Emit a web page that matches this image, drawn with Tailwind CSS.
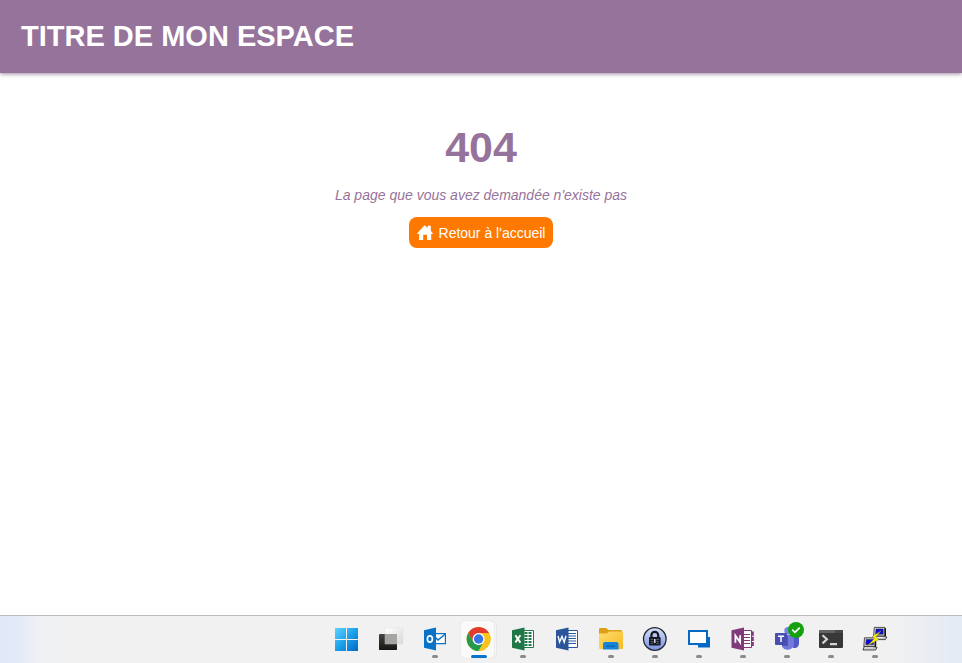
<!DOCTYPE html>
<html lang="fr">

<head>
    <meta charset="UTF-8">
    <meta name="viewport" content="width=device-width, initial-scale=1.0">
    <title>404 - Titre de mon espace</title>
    <script src="https://cdn.jsdelivr.net/npm/@tailwindcss/browser@4"></script>
</head>

<body class="min-h-screen flex flex-col bg-white font-['Liberation_Sans',Arial,sans-serif]">
    <header class="bg-[#96739b] text-white px-[21px] py-4 shadow-[0_1px_4px_rgba(90,60,95,0.6)]">
        <h1 class="text-[29px] leading-10 font-bold pb-px">TITRE DE MON ESPACE</h1>
    </header>

    <main class="flex-1 flex flex-col items-center pt-12 text-[#96739b]">
        <h2 class="text-[43px] leading-[52px] font-bold">404</h2>
        <p class="text-sm leading-5 italic mt-3">La page que vous avez demandée n'existe pas</p>
        <a href="/" class="mt-3 flex items-center gap-1.5 h-[31px] px-2 rounded-lg bg-[#ff7900] text-white text-sm">
            <svg class="w-4 h-4" viewBox="0 0 16 16" fill="#fff">
                <path d="M7.6.2 10.7 3V.7h3.1v5.1L15.6 8v1h-1.4v6H10V9.8H6.2V15H2.1V9H.4V8z" />
            </svg>
            Retour à l'accueil
        </a>
    </main>

    <!-- Barre des tâches -->
    <nav class="flex justify-center h-12 pl-[258px] border-t border-[#bcbcbc] bg-[linear-gradient(90deg,#dee8f7_0,#e5ebf7_22px,#f0f1f3_42px,#f1f1f1_80px,#f1f1f1_calc(100%-72px),#e3eaf5_100%)]">
        <button aria-label="Démarrer" class="relative w-11 flex justify-center pt-[11px]">
            <svg class="w-6 h-6 overflow-visible" viewBox="0 0 24 24">
                <defs>
                    <linearGradient id="win" x1="1" y1="1" x2="24" y2="24" gradientUnits="userSpaceOnUse">
                        <stop stop-color="#5cd4ff" />
                        <stop offset=".5" stop-color="#1ca0e8" />
                        <stop offset="1" stop-color="#0069c8" />
                    </linearGradient>
                </defs>
                <path fill="url(#win)" d="M1 1h11v11H1zM13 1h11v11H13zM1 13h11v11H1zM13 13h11v11H13z" />
            </svg>
        </button>
        <button aria-label="Vue des tâches" class="relative w-11 flex justify-center pt-[11px]">
            <svg class="w-6 h-6 overflow-visible" viewBox="0 0 24 24">
                <defs>
                    <linearGradient id="tvd" x2="0" y2="1">
                        <stop stop-color="#454541" />
                        <stop offset="1" stop-color="#151512" />
                    </linearGradient>
                    <linearGradient id="tvl" x2="1" y2="1">
                        <stop stop-color="#fff" />
                        <stop offset="1" stop-color="#d8d8d8" />
                    </linearGradient>
                </defs>
                <rect x="1" y="7" width="18" height="16" rx=".7" fill="url(#tvd)" />
                <path fill="url(#tvl)" stroke="#dedede" stroke-width=".4" d="M7 1h18v16H7z" />
                <path fill="#a4a4a3" d="M7 7h12v10H7z" />
            </svg>
        </button>
        <button aria-label="Outlook" class="relative w-11 flex justify-center pt-[11px]">
            <svg class="w-6 h-6 overflow-visible" viewBox="0 0 24 24">
                <path fill="#fff" stroke="#0a70c4" stroke-width="1.2" d="M13 6.6h10.4v10H13z" />
                <path fill="none" stroke="#0a70c4" stroke-width="1.5" d="m13 10 3 3 7.4-6" />
                <path fill="#0872c6" d="M2 3.2 14 .5v23L2 20.8z" />
                <ellipse cx="7.9" cy="12" rx="2.5" ry="3.1" fill="none" stroke="#fff" stroke-width="1.7" />
            </svg>
            <span class="absolute bottom-[5px] left-5 w-1.5 h-[3px] rounded-full bg-[#8b8b8b]"></span>
        </button>
        <button aria-label="Chrome" class="relative w-11 flex justify-center pt-[11px]">
            <span class="absolute left-1 top-1 w-[37px] h-[39px] rounded-md border border-[#e8e8e8] bg-[#f6f6f6]"></span>
            <span class="absolute left-1 top-1 w-[35px] h-[39px] rounded-md border border-[#ececec] bg-[#fafafa]"></span>
            <svg class="relative w-6 h-6 overflow-visible" viewBox="0 0 24 24">
                <circle cx="12.6" cy="12" r="12" fill="#fcc31e" />
                <path fill="#e33b2e" d="M2.21 6A12 12 0 0 1 22.99 6H12.6L7.4 15z" />
                <path fill="#249a4c" d="M2.21 6 7.4 15l5.2 3 5.2-3L12.6 24A12 12 0 0 1 2.21 6z" />
                <path fill="#fcc31e" d="M12.6 6h10.39A12 12 0 0 1 12.6 24l5.2-9z" />
                <circle cx="12.6" cy="12" r="6" fill="#fff" />
                <circle cx="12.6" cy="12" r="4.7" fill="#3476e4" />
            </svg>
            <span class="absolute bottom-[5px] left-[15px] w-4 h-[3px] rounded-full bg-[#0875cc]"></span>
        </button>
        <button aria-label="Excel" class="relative w-11 flex justify-center pt-[11px]">
            <svg class="w-6 h-6 overflow-visible" viewBox="0 0 24 24">
                <path fill="#fff" stroke="#20794a" d="M13 3.5h10.5v17H13z" />
                <path fill="none" stroke="#20794a" stroke-width="1.8" stroke-dasharray="3 1" d="M14.5 6H22M14.5 9H22M14.5 12H22M14.5 15H22M14.5 18H22" />
                <path fill="#1f7646" d="M2 3.2 14.5.5v23L2 20.8z" />
                <path fill="none" stroke="#fff" stroke-width="1.9" d="m5.4 8.4 5 7.2m0-7.4-5 7.2" />
            </svg>
            <span class="absolute bottom-[5px] left-5 w-1.5 h-[3px] rounded-full bg-[#8b8b8b]"></span>
        </button>
        <button aria-label="Word" class="relative w-11 flex justify-center pt-[11px]">
            <svg class="w-6 h-6 overflow-visible" viewBox="0 0 24 24">
                <path fill="#fff" stroke="#2c5699" d="M13 3.5h10.5v17H13z" />
                <path stroke="#2c5699" stroke-width="1.1" d="M14 6.5h8M14 9h8M14 11.5h8M14 14h8M14 16.5h8" />
                <path fill="#2a5699" d="M2 3.2 14.5.5v23L2 20.8z" />
                <path fill="none" stroke="#fff" stroke-width="1.4" d="m4 9 1.6 6L8 9.4l2.2 5.8L12 8.7" />
            </svg>
        </button>
        <button aria-label="Explorateur de fichiers" class="relative w-11 flex justify-center pt-[11px]">
            <svg class="w-6 h-6 overflow-visible" viewBox="0 0 24 24">
                <defs>
                    <linearGradient id="fold" x2="1" y2="1">
                        <stop stop-color="#ffdc70" />
                        <stop offset="1" stop-color="#f6bb20" />
                    </linearGradient>
                </defs>
                <path fill="#dfa019" d="M1 2.2Q1 1 2.2 1h6l2.3 2h12.3Q24 3 24 4.2V10H1z" />
                <path fill="url(#fold)" d="M1 6.5h8l2.2-2H25v16.3q0 1.2-1.2 1.2H2.2Q1 22 1 20.8z" />
                <path fill="#1683d6" d="M5 22.5v-5.3Q5 15 7 15h11.5q2 0 2 2.2v5.3z" />
                <path fill="#0c61ad" d="M8.5 18.7H17v1.2H8.5z" />
            </svg>
            <span class="absolute bottom-[5px] left-5 w-1.5 h-[3px] rounded-full bg-[#8b8b8b]"></span>
        </button>
        <button aria-label="KeePass" class="relative w-11 flex justify-center pt-[11px]">
            <svg class="w-6 h-6 overflow-visible" viewBox="0 0 24 24">
                <defs>
                    <linearGradient id="kp" x2="0" y2="1">
                        <stop stop-color="#d5e0fa" />
                        <stop offset="1" stop-color="#7891df" />
                    </linearGradient>
                </defs>
                <circle cx="12.8" cy="12" r="11.3" fill="url(#kp)" stroke="#24262c" stroke-width="1.3" />
                <path fill="none" stroke="#15171d" stroke-width="2.2" d="M9.4 11V8.2a3.4 3.4 0 0 1 6.8 0V11" />
                <rect x="7" y="10" width="11.6" height="8.5" rx="1" fill="#15171d" />
                <path stroke="#7280ad" stroke-width=".7" d="M8.5 12.4h8.6M8.5 14.4h8.6M8.5 16.4h8.6" />
                <path stroke="#15171d" stroke-width="3" d="M12.8 11v6" />
                <path stroke="#fff" stroke-width="1.3" d="M12.8 12v4" />
            </svg>
            <span class="absolute bottom-[5px] left-5 w-1.5 h-[3px] rounded-full bg-[#8b8b8b]"></span>
        </button>
        <button aria-label="Bureau à distance" class="relative w-11 flex justify-center pt-[11px]">
            <svg class="w-6 h-6 overflow-visible" viewBox="0 0 24 24">
                <path fill="#0569c4" d="M12 10h12v10.5H12z" />
                <path fill="#fff" stroke="#0569c4" stroke-width="2" d="M3 4h18v13H3z" />
            </svg>
            <span class="absolute bottom-[5px] left-5 w-1.5 h-[3px] rounded-full bg-[#8b8b8b]"></span>
        </button>
        <button aria-label="OneNote" class="relative w-11 flex justify-center pt-[11px]">
            <svg class="w-6 h-6 overflow-visible" viewBox="0 0 24 24">
                <path fill="#fff" stroke="#80397b" d="M13 3.5h8.5v17H13z" />
                <path fill="#80397b" d="M21.5 4.5h2.3v4.2h-2.3zM21.5 9.7h2.3v4.2h-2.3zM21.5 14.9h2.3v4.2h-2.3z" />
                <path stroke="#80397b" stroke-width="1" d="M14 7.5h6M14 10.5h6M14 13.5h6M14 16.5h6" />
                <path fill="#80397b" d="M1.5 3.2 14 .5v23L1.5 20.8z" />
                <path fill="none" stroke="#fff" stroke-width="1.8" d="M5.4 15.7V8.6l4.7 6.7V8.2" />
            </svg>
            <span class="absolute bottom-[5px] left-5 w-1.5 h-[3px] rounded-full bg-[#8b8b8b]"></span>
        </button>
        <button aria-label="Teams" class="relative w-11 flex justify-center pt-[11px]">
            <svg class="w-6 h-6 overflow-visible" viewBox="0 0 24 24">
                <circle cx="14" cy="3.7" r="3.7" fill="#7b83eb" />
                <path fill="#5059c9" d="M16 9h9v7.5a4.5 4.5 0 0 1-6 4.2z" />
                <path fill="#7379dc" d="M8 8h12v8.5a6.5 6.5 0 0 1-12 3.2z" />
                <path fill="#5158b8" d="M8 8h6v11H8z" />
                <rect x="1" y="6" width="12" height="12" rx="1" fill="#484fb2" />
                <path fill="none" stroke="#fff" stroke-width="1.5" d="M4 9.2h6M7 9.2V15" />
                <circle cx="22" cy="3" r="8" fill="#13a10e" />
                <path fill="none" stroke="#fff" stroke-width="1.7" stroke-linecap="round" d="m18.7 3.2 2.2 2.2 4.4-4.3" />
            </svg>
            <span class="absolute bottom-[5px] left-5 w-1.5 h-[3px] rounded-full bg-[#8b8b8b]"></span>
        </button>
        <button aria-label="Terminal" class="relative w-11 flex justify-center pt-[11px]">
            <svg class="w-6 h-6 overflow-visible" viewBox="0 0 24 24">
                <rect x="1" y="3" width="24" height="18" rx="1" fill="#383838" />
                <path fill="#636363" d="M2 3h22q1 0 1 1v2H1V4q0-1 1-1z" />
                <path fill="#484848" d="M17 3h7q1 0 1 1v2h-8z" />
                <path fill="none" stroke="#d4d4d4" stroke-width="2.2" d="m4.5 8.2 4.4 4.1-4.4 4.1M12 17.2h7" />
            </svg>
            <span class="absolute bottom-[5px] left-5 w-1.5 h-[3px] rounded-full bg-[#8b8b8b]"></span>
        </button>
        <button aria-label="PuTTY" class="relative w-11 flex justify-center pt-[11px]">
            <svg class="w-6 h-6 overflow-visible" viewBox="0 0 24 24">
                <g id="pc">
                    <path fill="#d6d6d6" stroke="#111" stroke-width=".7" d="M12.3.4h10.4V9H11.6z" />
                    <path fill="#111" d="M22.7.4 24 1.4V9l-1.3 1z" />
                    <path fill="#0a0ae0" stroke="#222" stroke-width=".5" d="M14 2h7.2v5.2h-7.6z" />
                    <path fill="#c4c4c4" stroke="#111" stroke-width=".7" d="M11.8 9.4h10.7l2.4.6-1.5 2.6H10.8z" />
                    <path stroke="#fff" stroke-width=".8" d="M12.3 10.4h9" />
                </g>
                <use href="#pc" x="-9.8" y="10.4" />
                <path fill="#fff200" stroke="#80791a" stroke-width=".4" d="m19.2 3.8-9 5.6 2.4 2-7.2 7.4 11.2-6.4-2.9-2.3z" />
            </svg>
            <span class="absolute bottom-[5px] left-5 w-1.5 h-[3px] rounded-full bg-[#8b8b8b]"></span>
        </button>
    </nav>
</body>

</html>
